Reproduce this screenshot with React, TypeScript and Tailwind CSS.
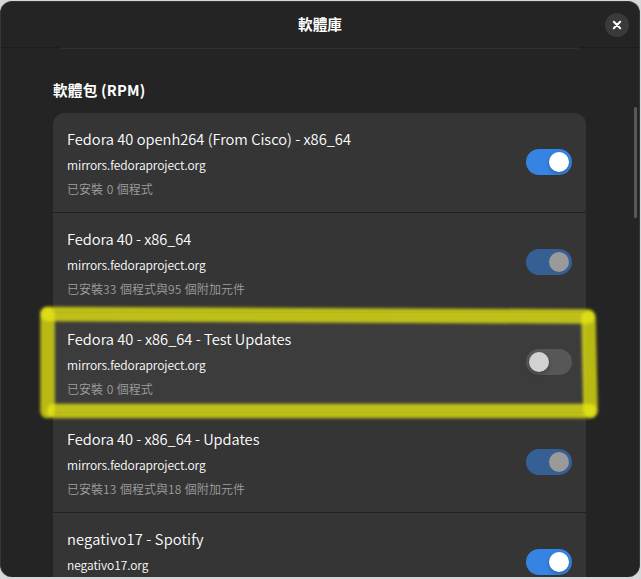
type ToggleState = 'on' | 'onDisabled' | 'off';

interface Repo {
  name: string;
  host: string;
  detail?: string;
  state: ToggleState;
  tracking: string;
}

const repos: Repo[] = [
  { name: 'Fedora 40 openh264 (From Cisco) - x86_64', host: 'mirrors.fedoraproject.org', detail: '已安裝 0 個程式', state: 'on', tracking: 'tracking-normal' },
  { name: 'Fedora 40 - x86_64', host: 'mirrors.fedoraproject.org', detail: '已安裝33 個程式與95 個附加元件', state: 'onDisabled', tracking: 'tracking-[-0.06px]' },
  { name: 'Fedora 40 - x86_64 - Test Updates', host: 'mirrors.fedoraproject.org', detail: '已安裝 0 個程式', state: 'off', tracking: 'tracking-normal' },
  { name: 'Fedora 40 - x86_64 - Updates', host: 'mirrors.fedoraproject.org', detail: '已安裝13 個程式與18 個附加元件', state: 'onDisabled', tracking: 'tracking-[-0.04px]' },
  { name: 'negativo17 - Spotify', host: 'negativo17.org', state: 'on', tracking: 'tracking-[0.15px]' },
];

const track: Record<ToggleState, string> = {
  on: 'bg-[#3584e4] justify-end',
  onDisabled: 'bg-[#365f93] justify-end',
  off: 'bg-[#575757] justify-start',
};

const knob: Record<ToggleState, string> = {
  on: 'bg-white shadow-[0_2px_4px_rgba(0,0,0,0.25)]',
  onDisabled: 'bg-[#9a9a9a]',
  off: 'bg-[#d2d2d2] shadow-[0_2px_4px_rgba(0,0,0,0.25)]',
};

function Toggle({ state }: { state: ToggleState }) {
  return (
    <button
      role="switch"
      aria-checked={state !== 'off'}
      disabled={state === 'onDisabled'}
      className={`flex h-[26px] w-[46px] shrink-0 items-center rounded-full p-[3px] ${track[state]}`}
    >
      <span className={`size-5 rounded-full ${knob[state]}`} />
    </button>
  );
}

function RepoRow({ repo }: { repo: Repo }) {
  return (
    <li
      className={`flex h-[100px] shrink-0 items-center justify-between border-b border-[#212121] px-[14px] pb-px ${
        repo.state === 'off' ? 'bg-[#3c3c3c]' : 'bg-[#353535]'
      }`}
    >
      <div className="flex h-full flex-col pt-[14px] font-[350]">
        <span className={`h-[26px] text-[14.667px] leading-[24px] text-white ${repo.tracking}`}>{repo.name}</span>
        <span className="h-6 text-[12px] leading-[24px] tracking-[-0.07px] text-white">{repo.host}</span>
        <span className="h-6 text-[12px] leading-[24px] tracking-[0.04px] [word-spacing:0.8px] text-[#9f9f9f]">{repo.detail}</span>
      </div>
      <Toggle state={repo.state} />
    </li>
  );
}

function Highlight() {
  return (
    <svg className="pointer-events-none absolute inset-0" width="641" height="579" viewBox="0 0 641 579" fill="none">
      <defs>
        <filter id="marker-soft" x="0" y="280" width="641" height="160" filterUnits="userSpaceOnUse">
          <feGaussianBlur stdDeviation="1.8" />
        </filter>
      </defs>
      <g filter="url(#marker-soft)" stroke="#e6e614" strokeOpacity="0.77" strokeWidth="14.5" strokeLinecap="round">
        <path d="M47.5 314L588 316.5" />
        <path d="M588.5 318L590.5 410.5" />
        <path d="M590 411L54 411" />
        <path d="M47.5 314L47.5 411" />
      </g>
    </svg>
  );
}

export default function App() {
  return (
    <div
      lang="zh-Hant"
      className="relative h-[579px] w-[641px] overflow-hidden bg-[#d5d8d8] pt-px font-['Noto_Sans_CJK_TC',sans-serif]"
    >
      <main className="flex h-[576px] w-[640px] flex-col overflow-hidden rounded-xl border border-b-0 border-[#363636] bg-[#242424]">
        <header className="grid h-[46px] shrink-0 grid-cols-[1fr_auto_1fr] items-center border-b border-[#1c1c1c] px-[10px]">
          <span />
          <h1 className="pb-[2px] text-[14.667px] leading-5 font-bold text-white">軟體庫</h1>
          <button aria-label="關閉" className="flex size-6 items-center justify-center justify-self-end rounded-full bg-[#3a3a3a]">
            <svg width="10" height="10" viewBox="0 0 10 10" stroke="white" strokeWidth="2" strokeLinecap="round">
              <path d="M1.8 1.8L8.2 8.2M8.2 1.8L1.8 8.2" />
            </svg>
          </button>
        </header>
        <div className="flex min-h-0 flex-1">
          <div className="flex min-w-0 flex-1 flex-col pl-[52px]">
            <div className="-mt-px ml-[7px] h-[2px] w-[519px] shrink-0 rounded-b-full border-b border-[#323232] bg-[#242424]" />
            <h2 className="mt-[30px] h-[34px] shrink-0 text-[14.667px] leading-[22px] font-bold tracking-[0.2px] text-white">軟體包 (RPM)</h2>
            <ul className="flex min-h-0 w-[533px] flex-1 flex-col overflow-hidden rounded-t-xl bg-[#353535]">
              {repos.map((repo) => (
                <RepoRow key={repo.name} repo={repo} />
              ))}
            </ul>
          </div>
          <div className="flex w-[5px] pt-[59px]">
            <div className="h-[111px] w-[3px] rounded-full bg-[#595959]" />
          </div>
        </div>
      </main>
      <Highlight />
    </div>
  );
}
